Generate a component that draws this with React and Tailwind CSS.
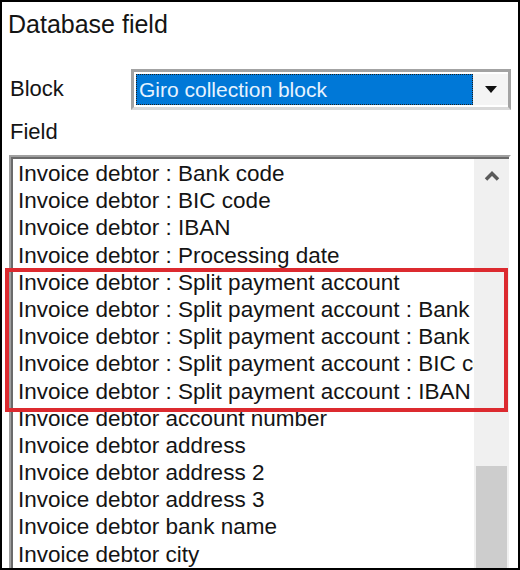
import React from 'react';

const rows = [
    'Invoice debtor : Bank code',
    'Invoice debtor : BIC code',
    'Invoice debtor : IBAN',
    'Invoice debtor : Processing date',
    'Invoice debtor : Split payment account',
    'Invoice debtor : Split payment account : Bank code',
    'Invoice debtor : Split payment account : Bank name',
    'Invoice debtor : Split payment account : BIC code',
    'Invoice debtor : Split payment account : IBAN',
    'Invoice debtor account number',
    'Invoice debtor address',
    'Invoice debtor address 2',
    'Invoice debtor address 3',
    'Invoice debtor bank name',
    'Invoice debtor city',
    'Invoice debtor country',
];

const ComboBox = () => (
    <div className="w-[380px] h-[41px] flex border-[3px] border-[#a3a3a3] border-b-[#d9d9d9] bg-white p-[2px] pr-0">
        <div className="flex-1 flex items-center bg-[#0078d7] border border-dotted border-[#202020] pl-[2px] text-[21px] text-[#e6f3ff] leading-none">
            Giro collection block
        </div>
        <div className="w-[35px] flex items-center justify-center bg-[#f4f4f4]">
            <svg width="12" height="7" viewBox="0 0 12 7">
                <path d="M0 0 L12 0 L6 7 Z" fill="#111" />
            </svg>
        </div>
    </div>
);

const ListBox = () => (
    <div className="ml-[7px] w-[502px] h-[430px] border-t-2 border-l-2 border-r-2 border-[#a0a0a0] border-r-white">
        <div className="h-full flex border-t-2 border-l-2 border-[#6b6b6b]">
            <div className="flex-1 overflow-hidden pl-[5px] pt-[1px] text-[22.5px] leading-[27.2px] text-[#141414] whitespace-nowrap">
                {rows.map((r) => (
                    <div key={r} className="h-[27.2px]">{r}</div>
                ))}
            </div>
            <div className="w-[35px] bg-[#f0f0f0] flex flex-col overflow-hidden">
                <div className="h-[34px] shrink-0 flex items-center justify-center">
                    <svg width="16" height="10" viewBox="0 0 16 10">
                        <path d="M2 8.5 L8 2.5 L14 8.5" fill="none" stroke="#5a5a5a" strokeWidth="3.5" />
                    </svg>
                </div>
                <div className="mt-[273px] mx-[2px] h-[200px] shrink-0 bg-[#cdcdcd]" />
            </div>
        </div>
    </div>
);

export default function App() {
    return (
        <div
            className="w-[520px] h-[570px] border-2 border-black bg-white overflow-hidden relative text-[#141414]"
            style={{ fontFamily: '"Liberation Sans", Arial, sans-serif' }}
        >
            <div className="pl-[6px] pt-[8px] text-[25px] leading-[28px]">Database field</div>

            <div className="flex mt-[31px]">
                <div className="w-[129px] pl-[8px] mt-[6px] text-[22px] leading-[28px]">Block</div>
                <ComboBox />
            </div>

            <div className="pl-[8px] mt-[8px] text-[22px] leading-[28px]">Field</div>

            <div className="mt-[9px]">
                <ListBox />
            </div>

            <div className="absolute left-[3px] top-[266px] w-[503px] h-[144px] border-4 border-[#dc2a2f]" />
        </div>
    );
}
